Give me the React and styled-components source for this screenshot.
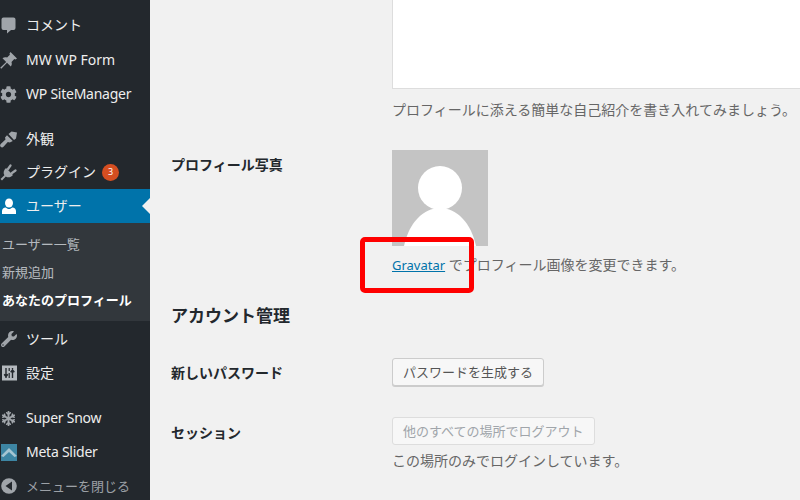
import React from 'react';
import styled, { createGlobalStyle } from 'styled-components';
import { FaCog, FaWrench, FaSnowflake } from 'react-icons/fa';

const GlobalStyle = createGlobalStyle`
  html, body {
    margin: 0;
    padding: 0;
    background: #f1f1f1;
  }
  body {
    font-family: "Noto Sans", "Noto Sans CJK JP", sans-serif;
    font-size: 14px;
    color: #444;
  }
  * {
    box-sizing: border-box;
  }
`;

const Page = styled.div`
  display: flex;
  width: 800px;
  height: 500px;
  overflow: hidden;
  position: relative;
`;

// 左メニュー
const Sidebar = styled.nav`
  width: 150px;
  flex-shrink: 0;
  height: 500px;
  background: #23282d;
  padding-top: 8px;
  overflow: hidden;
`;

const MenuRow = styled.div`
  position: relative;
  display: flex;
  align-items: center;
  height: 34px;
  margin-top: ${({ $gap }) => $gap || 0}px;
  background: ${({ $active }) => ($active ? '#0073aa' : 'transparent')};
  color: ${({ $muted }) => ($muted ? 'rgba(240, 245, 250, 0.6)' : '#eee')};
  font-size: ${({ $muted }) => ($muted ? 13 : 14)}px;
  letter-spacing: ${({ $latin }) => ($latin ? '-0.25px' : 'normal')};
  line-height: 18px;
  white-space: nowrap;
`;

const IconSlot = styled.span`
  display: flex;
  align-items: center;
  justify-content: center;
  width: 17px;
  height: 17px;
  margin-right: 9px;
  color: ${({ $active }) => ($active ? '#fff' : '#a0a5aa')};
  svg {
    display: block;
    flex-shrink: 0;
  }
`;

const Badge = styled.span`
  display: inline-flex;
  align-items: center;
  justify-content: center;
  width: 17px;
  height: 17px;
  margin-left: 6px;
  border-radius: 50%;
  background: #d54e21;
  color: #fff;
  font-size: 9px;
`;

const ActiveArrow = styled.span`
  position: absolute;
  right: 0;
  top: 9px;
  border: 8px solid transparent;
  border-right-color: #f1f1f1;
  border-left-width: 0;
`;

const SubMenu = styled.div`
  background: #32373c;
  padding: 7px 0 7px 2px;
  margin-bottom: 1px;
`;

const SubItem = styled.div`
  height: 28px;
  line-height: 28px;
  font-size: 13px;
  white-space: nowrap;
  color: ${({ $current }) => ($current ? '#fff' : 'rgba(240, 245, 250, 0.7)')};
  font-weight: ${({ $current }) => ($current ? 600 : 400)};
`;

// 右側のフォーム
const Main = styled.main`
  flex: 1;
  min-width: 0;
  padding-left: 21px;
  overflow: hidden;
`;

const Row = styled.div`
  display: grid;
  grid-template-columns: 221px 1fr;
  margin-top: ${({ $top }) => $top || 0}px;
`;

const Label = styled.div`
  font-weight: 600;
  font-size: 14px;
  line-height: 20px;
  color: #23282d;
  padding-top: ${({ $pad }) => $pad || 0}px;
`;

const BioBox = styled.div`
  width: 500px;
  height: 99px;
  margin-top: -10px;
  background: #fff;
  border: 1px solid #ddd;
`;

const Hint = styled.p`
  margin: ${({ $top }) => $top || 0}px 0 0;
  width: 420px;
  font-size: 14px;
  line-height: 20px;
  white-space: nowrap;
  color: #666;
`;

const Avatar = styled.svg`
  display: block;
  width: 96px;
  height: 96px;
`;

const GravatarLink = styled.a`
  color: #0073aa;
  text-decoration: underline;
  font-size: 13px;
`;

const SectionTitle = styled.h2`
  margin: 27px 0 0;
  font-size: 17px;
  line-height: 28px;
  font-weight: 600;
  color: #23282d;
`;

const Button = styled.button`
  display: block;
  justify-self: start;
  height: 28px;
  padding: 0 10px;
  font: inherit;
  font-size: 13px;
  line-height: 26px;
  white-space: nowrap;
  background: #f7f7f7;
  border: 1px solid ${({ disabled }) => (disabled ? '#ddd' : '#ccc')};
  border-radius: 3px;
  color: ${({ disabled }) => (disabled ? '#a0a5aa' : '#555')};
  box-shadow: ${({ disabled }) => (disabled ? 'none' : '0 1px 0 #ccc')};
`;

// 赤い枠の注釈
const Annotation = styled.div`
  position: absolute;
  left: 360px;
  top: 237px;
  width: 114px;
  height: 56px;
  border: 5px solid #f00;
  border-radius: 5px;
`;

const BubbleIcon = () => (
  <svg width="15" height="17" viewBox="0 0 15 17" fill="currentColor">
    <path d="M2.500 0.500h10A2 2 0 0 1 14.500 2.500v8.500a2 2 0 0 1-2 2H10l-4 3.500V13H2.500a2 2 0 0 1-2-2V2.500a2 2 0 0 1 2-2z" />
  </svg>
);

const PinIcon = () => (
  <svg width="17" height="17" viewBox="0 0 17 17" fill="currentColor">
    <path d="M10.500 0l6.500 6.500-1.500 1-1.200-.4-2.800 2.800c.6 1.700.3 3.300-.7 4.600L7 10.800 1.300 16.800 0.200 15.700 6.200 10 2.500 6.300c1.300-1 2.900-1.300 4.600-.7l2.800-2.800-.4-1.200z" />
  </svg>
);

const BrushIcon = () => (
  <svg width="17" height="17" viewBox="0 0 17 17" fill="currentColor">
    <path d="M8.500 3L11.500.5 17 1.500l-1 6-2 1.500z" />
    <path d="M7 4.200l5.800 5.800-3 1.500-2-.5-4.300 4.800c-.9.800-2 .8-2.800 0s-.8-1.900 0-2.800L5.500 8.500 5 6.500z" />
  </svg>
);

const PlugIcon = () => (
  <svg width="17" height="17" viewBox="0 0 17 17" fill="currentColor">
    <path d="M10.500 1.500L8 5" stroke="currentColor" strokeWidth="2.200" strokeLinecap="round" />
    <path d="M15.500 6.500L12 9" stroke="currentColor" strokeWidth="2.200" strokeLinecap="round" />
    <path d="M6 4l7 7c-2.300 2.600-5 3-7.200 1.500L2 16.500.5 15l3.900-3.800C3 9 3.500 6.300 6 4z" />
  </svg>
);

const UserIcon = () => (
  <svg width="16" height="17" viewBox="0 0 16 17" fill="currentColor">
    <ellipse cx="8" cy="5" rx="4" ry="4.500" />
    <path d="M1 16v-3c0-2 1.500-3.300 3.800-3.500C5.600 10.400 6.700 11 8 11s2.400-.6 3.200-1.500C13.500 9.700 15 11 15 13v3z" />
  </svg>
);

const SlidersIcon = () => (
  <svg width="16" height="16" viewBox="0 0 16 16">
    <rect x="1" y="0.500" width="15" height="15" fill="#b4b9be" />
    <path d="M5 3v8M3.200 9.200L5 11.500l1.800-2.300M5 13v-1M11.500 13V5.500M9.700 7.300L11.500 5l1.800 2.300M11.500 4V3" stroke="#23282d" strokeWidth="1.400" fill="none" />
    <path d="M8.200 3v3M8.200 8v5" stroke="#23282d" strokeWidth="1.200" fill="none" />
  </svg>
);

const MountainIcon = () => (
  <svg width="16" height="17" viewBox="0 0 16 17">
    <rect width="16" height="17" fill="#3d85a3" />
    <path d="M0 12l8-8 8 8-2.500 1L8 8l-5.500 5z" fill="#a5c5d2" />
  </svg>
);

const CollapseIcon = () => (
  <svg width="16" height="16" viewBox="0 0 16 16">
    <circle cx="8" cy="8" r="7.800" fill="#a0a5aa" />
    <path d="M11 3.500v9L4.500 8z" fill="#23282d" />
  </svg>
);

const App = () => {
  return (
    <>
      <GlobalStyle />
      <Page>
        <Sidebar>
          <MenuRow><IconSlot><BubbleIcon /></IconSlot>コメント</MenuRow>
          <MenuRow $gap={1}><IconSlot><PinIcon /></IconSlot>MW WP Form</MenuRow>
          <MenuRow $latin><IconSlot><FaCog size={17} /></IconSlot>WP SiteManager</MenuRow>
          <MenuRow $gap={11}><IconSlot><BrushIcon /></IconSlot>外観</MenuRow>
          <MenuRow $gap={-1}><IconSlot><PlugIcon /></IconSlot>プラグイン<Badge>3</Badge></MenuRow>
          <MenuRow $active>
            <IconSlot $active><UserIcon /></IconSlot>ユーザー
            <ActiveArrow />
          </MenuRow>
          <SubMenu>
            <SubItem>ユーザー一覧</SubItem>
            <SubItem>新規追加</SubItem>
            <SubItem $current>あなたのプロフィール</SubItem>
          </SubMenu>
          <MenuRow><IconSlot><FaWrench size={16} /></IconSlot>ツール</MenuRow>
          <MenuRow><IconSlot><SlidersIcon /></IconSlot>設定</MenuRow>
          <MenuRow $gap={11} $latin><IconSlot><FaSnowflake size={15} /></IconSlot>Super Snow</MenuRow>
          <MenuRow $latin><IconSlot><MountainIcon /></IconSlot>Meta Slider</MenuRow>
          <MenuRow $muted><IconSlot><CollapseIcon /></IconSlot>メニューを閉じる</MenuRow>
        </Sidebar>
        <Main>
          <Row>
            <span />
            <div>
              <BioBox />
              <Hint $top={11}>プロフィールに添える簡単な自己紹介を書き入れてみましょう。</Hint>
            </div>
          </Row>
          <Row $top={30}>
            <Label $pad={5}>プロフィール写真</Label>
            <div>
              <Avatar viewBox="0 0 96 96">
                <rect width="96" height="96" fill="#c4c4c4" />
                <circle cx="48" cy="38" r="22" fill="#fff" />
                <path d="M12 96C17 73 31 58 48 58s31 15 36 38z" fill="#fff" />
              </Avatar>
              <Hint $top={9}><GravatarLink href="#">Gravatar</GravatarLink> でプロフィール画像を変更できます。</Hint>
            </div>
          </Row>
          <SectionTitle>アカウント管理</SectionTitle>
          <Row $top={28}>
            <Label $pad={5}>新しいパスワード</Label>
            <Button>パスワードを生成する</Button>
          </Row>
          <Row $top={31}>
            <Label $pad={6}>セッション</Label>
            <div>
              <Button disabled>他のすべての場所でログアウト</Button>
              <Hint $top={6}>この場所のみでログインしています。</Hint>
            </div>
          </Row>
        </Main>
        <Annotation />
      </Page>
    </>
  );
};

export default App;
